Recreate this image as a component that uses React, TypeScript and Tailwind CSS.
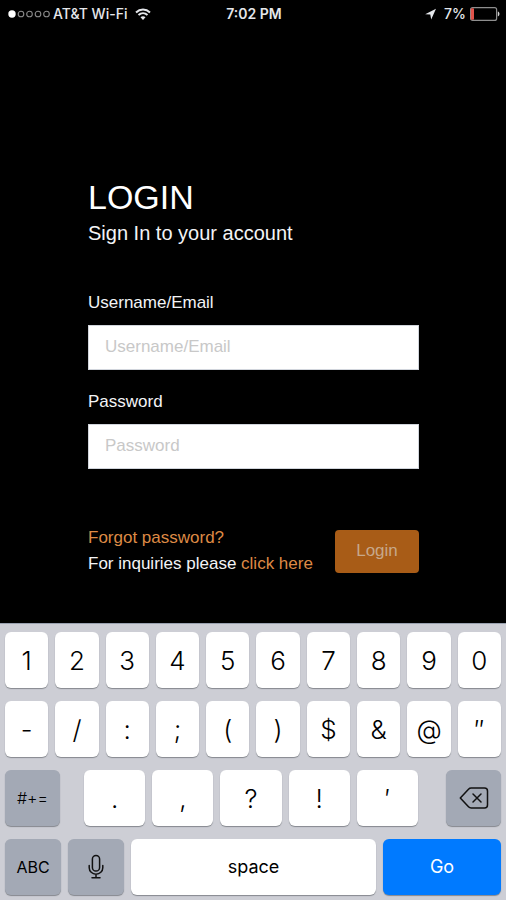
import { useState } from "react";
import type { ReactNode } from "react";
import clsx from "clsx";

const numberKeys = ["1", "2", "3", "4", "5", "6", "7", "8", "9", "0"];
const symbolKeys = ["-", "/", ":", ";", "(", ")", "$", "&", "@", "″"];
const punctuationKeys = [".", ",", "?", "!", "′"];

function WifiIcon() {
  return (
    <svg width="16" height="12" viewBox="0 0 16 12" fill="none" stroke="currentColor" aria-hidden="true">
      <path d="M1 4.400C5 .6 11 .6 15 4.400" strokeWidth="2" />
      <path d="M3.500 7c2.600-2.400 6.400-2.400 9 0" strokeWidth="1.900" />
      <path d="M5.500 9.200 8 12 10.500 9.200C9 8 7 8 5.500 9.200Z" fill="currentColor" stroke="none" />
    </svg>
  );
}

function LocationIcon() {
  return (
    <svg width="11" height="12" viewBox="0 0 11 12" fill="currentColor" aria-hidden="true">
      <path d="M11 .8.200 6.200 5.300 6.500 6.200 11.600Z" />
    </svg>
  );
}

function BatteryIcon() {
  return (
    <svg width="30" height="14" viewBox="0 0 30 14" fill="none" aria-hidden="true">
      <rect x=".6" y=".6" width="26" height="12.800" rx="2" stroke="#8e8e8e" strokeWidth="1.200" />
      <rect x=".8" y="1.200" width="3.200" height="11.600" rx=".8" fill="#e0524a" />
      <path d="M27.800 4.600c2.200.6 2.200 4.200 0 4.800Z" fill="#d4d4d4" />
    </svg>
  );
}

function SignalDots() {
  return (
    <svg width="43" height="8" viewBox="0 0 43 8" fill="none" aria-hidden="true">
      <circle cx="4" cy="4" r="3.700" fill="#fff" />
      {[13, 21.5, 30, 38.5].map((cx) => (
        <circle key={cx} cx={cx} cy="4" r="2.800" stroke="#8a8a8a" strokeWidth="1.100" />
      ))}
    </svg>
  );
}

function MicIcon() {
  return (
    <svg width="18" height="26" viewBox="0 0 18 26" fill="none" stroke="#111" strokeWidth="1.500" strokeLinecap="round" aria-hidden="true">
      <rect x="5.400" y="1.500" width="7.200" height="15.500" rx="3.600" />
      <path d="M2.200 11.500v2.300a6.800 6.400 0 0 0 13.600 0v-2.300M9 20.300v3.500M5 23.800h8" />
    </svg>
  );
}

function BackspaceIcon() {
  return (
    <svg width="30" height="22" viewBox="0 0 30 22" fill="none" stroke="#111" strokeWidth="1.500" strokeLinecap="round" strokeLinejoin="round" aria-hidden="true">
      <path d="M1.300 11 9.500 2.200Q10.600 1 12.200 1H25.500Q28.500 1 28.500 4V18Q28.500 21 25.500 21H12.200Q10.600 21 9.500 19.800Z" />
      <path d="m14 7 8 8M22 7l-8 8" />
    </svg>
  );
}

interface KeyProps {
  children: ReactNode;
  label?: string;
  className?: string;
}

function Key({ children, label, className }: KeyProps) {
  return (
    <button
      type="button"
      aria-label={label}
      className={clsx(
        "flex h-14 min-w-0 items-center justify-center rounded-md shadow-[0_1px_1px_#85888e]",
        className
      )}
    >
      {children}
    </button>
  );
}

function StatusBar() {
  return (
    <header className="grid grid-cols-[1fr_auto_1fr] items-center pt-1 pr-1.5 pl-2 font-['Inter',sans-serif] text-sm font-medium text-gray-200">
      <div className="flex items-center gap-0.5">
        <SignalDots />
        <span>AT&amp;T Wi-Fi</span>
        <span className="ml-1.5"><WifiIcon /></span>
      </div>
      <span className="font-semibold">7:02 PM</span>
      <div className="flex items-center justify-end gap-1">
        <span className="mr-1"><LocationIcon /></span>
        <span>7%</span>
        <BatteryIcon />
      </div>
    </header>
  );
}

function LoginForm() {
  const [username, setUsername] = useState("");
  const [password, setPassword] = useState("");

  const inputClass =
    "mt-3 block h-[45px] w-full border border-gray-300 bg-white px-4 pb-0.5 text-[17px] text-black placeholder:text-[#c8c8c8] outline-none";

  return (
    <form
      className="w-full pt-[153px] pr-[87px] pb-10 pl-[88px] text-[17px] text-gray-100"
      onSubmit={(e) => e.preventDefault()}
    >
      <h1 className="text-[34px] leading-10 text-white">LOGIN</h1>
      <p className="text-xl leading-8">Sign In to your account</p>

      <div className="mt-11">
        <label htmlFor="username" className="block leading-5">Username/Email</label>
        <input
          id="username"
          type="text"
          placeholder="Username/Email"
          value={username}
          onChange={(e) => setUsername(e.target.value)}
          className={inputClass}
        />
      </div>
      <div className="mt-[22px]">
        <label htmlFor="password" className="block leading-5">Password</label>
        <input
          id="password"
          type="password"
          placeholder="Password"
          value={password}
          onChange={(e) => setPassword(e.target.value)}
          className={inputClass}
        />
      </div>

      <div className="mt-14 flex items-center justify-between">
        <div className="leading-[26px] whitespace-nowrap">
          <a href="#forgot" className="text-[#dd8a45]">Forgot password?</a>
          <p>
            For inquiries please <a href="#contact" className="text-[#dd8a45]">click here</a>
          </p>
        </div>
        <button type="submit" className="h-[43px] w-[84px] shrink-0 rounded-sm bg-[#a85c17] text-[#c7a88a]">
          Login
        </button>
      </div>
    </form>
  );
}

function Keyboard() {
  return (
    <div className="flex flex-col gap-[13px] border-t border-gray-400 bg-[#cdced5] px-[5px] pt-2 pb-[5px] font-['Inter',sans-serif] text-[26px] text-black">
      <div className="flex gap-[7px]">
        {numberKeys.map((k) => (
          <Key key={k} className="flex-1 bg-white font-light">{k}</Key>
        ))}
      </div>
      <div className="flex gap-[7px]">
        {symbolKeys.map((k) => (
          <Key key={k} className="flex-1 bg-white font-light">{k}</Key>
        ))}
      </div>
      <div className="flex">
        <Key label="More symbols" className="w-[55px] bg-[#a3a9b5] text-base font-light">#+=</Key>
        <div className="mr-7 ml-6 flex flex-1 gap-[7px]">
          {punctuationKeys.map((k) => (
            <Key key={k} className="flex-1 bg-white font-light">{k}</Key>
          ))}
        </div>
        <Key label="Delete" className="w-[55px] bg-[#a3a9b5]"><BackspaceIcon /></Key>
      </div>
      <div className="flex gap-[7px]">
        <Key className="w-14 bg-[#a3a9b5] text-base">ABC</Key>
        <Key label="Dictation" className="w-14 bg-[#a3a9b5]"><MicIcon /></Key>
        <Key className="flex-1 bg-white text-lg">space</Key>
        <Key className="w-[118px] bg-[#007aff] text-lg text-white">Go</Key>
      </div>
    </div>
  );
}

function App() {
  return (
    <div className="flex min-h-screen flex-col bg-black font-['Liberation_Sans',Arial,sans-serif]">
      <StatusBar />
      <main className="flex-1">
        <LoginForm />
      </main>
      <Keyboard />
    </div>
  );
}

export default App;
